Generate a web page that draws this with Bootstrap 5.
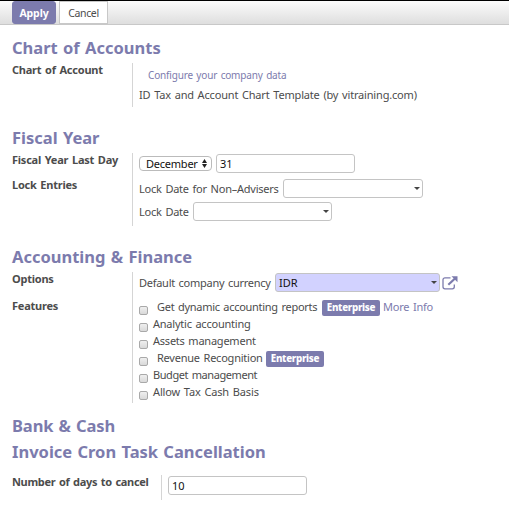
<!DOCTYPE html>
<html lang="en">
<head>
<meta charset="utf-8">
<meta name="viewport" content="width=device-width, initial-scale=1">
<title>Accounting Settings</title>
<link href="https://cdn.jsdelivr.net/npm/bootstrap@5.3.0/dist/css/bootstrap.min.css" rel="stylesheet">
<style>
:root{--brand:#7c7bad}
body{font:11px/17px "Noto Sans","Open Sans",sans-serif;letter-spacing:-.23px;word-spacing:1.1px;color:#4c4c4c;background:#fff;overflow:hidden}
.toolbar{height:25px;border-top:1px solid #000;border-bottom:1px solid #c8c8c8;background:linear-gradient(#fcfcfc,#dedede);padding-left:12px;gap:3px}
.toolbar .btn{height:23px;font-size:10.5px;line-height:18px;padding:0}
.toolbar .btn-apply,.toolbar .btn-apply:hover{width:44px;background:var(--brand);color:#fff;border:1px solid var(--brand);border-radius:3px;font-weight:700;letter-spacing:-.1px}
.toolbar .btn-cancel,.toolbar .btn-cancel:hover{width:49px;background:#fff;color:#4c4c4c;border:1px solid #c8c8c8;border-radius:0;letter-spacing:-.35px}
.settings{padding-left:12px}
.section-title{font-size:16.5px;line-height:18px;font-weight:700;letter-spacing:0;word-spacing:1px;color:var(--brand);margin:22px 0 6px;white-space:nowrap}
.title-first{margin-top:14px}
.title-empty{margin:14px 0 8px;letter-spacing:-.1px}
.title-last{margin:0 0 14px}
.group-chart{height:44px}
.group-fiscal{height:73px}
.group-finance{height:131px}
.group-cron{height:25px}
.form-group-label{width:120px;font-weight:700;white-space:nowrap;margin-top:-2px}
.cron-label{width:149px;letter-spacing:-.32px}
.label-gap-25{height:25px}
.label-gap-27{height:27px}
.fields{border-left:1px solid #d5d5d5;padding:1px 0 0 6px;white-space:nowrap}
.field-row{height:19px}
.chart-link{height:19px;padding:3px 0 0 9px;font-size:10px;letter-spacing:-.18px}
.chart-name{height:20px;padding-top:3px;letter-spacing:-.18px}
.box{height:19px;border:1px solid #c4c4c4;border-radius:3px;padding:0 2px 0 3px;line-height:17px;font-size:11px;letter-spacing:0;color:#111;background:#fff;outline:0}
.w-139{width:139px}.w-140{width:140px}.w-165{width:165px}
.required{background:#d2d2ff}
.drop-arrow{width:6px;height:3px;fill:#444}
.month{width:73px;height:15px;border:1px solid #bbb;border-radius:4px;padding:0 4px 0 6px;margin-right:4px;line-height:13px;color:#111}
.gap-after-6{margin-bottom:6px}.gap-after-4{margin-bottom:4px}.gap-after-7{margin-bottom:7px}
.text-lock{width:144px}.text-date{width:54px}.text-currency{width:136px;letter-spacing:-.27px;margin-top:-1px}
.text-reports{margin-left:4px;width:161px;letter-spacing:-.29px}.text-revenue{margin-left:4px;width:105px}
.open-icon{margin-left:2px}
.brand-text,.brand-text:hover{color:var(--brand);text-decoration:none}
.option{height:17px;line-height:15px}
.option input{appearance:none;width:9px;height:9px;margin:7px 5px 0 0;border:1px solid #a9a9a9;border-radius:2px;background:linear-gradient(#efefef,#d9d9d9)}
.text-budget{letter-spacing:-.42px}
.text-basis{letter-spacing:-.15px}
.tag{height:16px;width:58px;border-radius:2px;background:var(--brand);color:#fff;font-weight:800;font-size:9.8px;letter-spacing:-.3px;line-height:15px;text-align:center;margin:1px 3px 0 4px}
</style>
<script src="https://cdn.jsdelivr.net/npm/bootstrap@5.3.0/dist/js/bootstrap.bundle.min.js"></script>
</head>
<body>
<header class="toolbar d-flex">
  <button class="btn btn-apply">Apply</button>
  <button class="btn btn-cancel">Cancel</button>
</header>
<main class="settings">
  <h2 class="section-title title-first">Chart of Accounts</h2>
  <section class="d-flex group-chart">
    <div class="form-group-label">Chart of Account</div>
    <div class="fields">
      <div class="chart-link"><a href="#" class="brand-text">Configure your company data</a></div>
      <div class="chart-name">ID Tax and Account Chart Template (by vitraining.com)</div>
    </div>
  </section>

  <h2 class="section-title">Fiscal Year</h2>
  <section class="d-flex group-fiscal">
    <div class="form-group-label"><div class="label-gap-25">Fiscal Year Last Day</div><div>Lock Entries</div></div>
    <div class="fields">
      <div class="field-row gap-after-6 d-flex align-items-center">
        <div class="month d-flex align-items-center justify-content-between"><span>December</span>
          <svg width="5" height="9" viewBox="0 0 5 9" fill="#222"><path d="M0 4 2.5 0 5 4zM0 5h5L2.5 9z"/></svg></div>
        <input class="box w-139" value="31" aria-label="Day">
      </div>
      <div class="field-row gap-after-4 d-flex align-items-center">
        <span class="text-lock">Lock Date for Non–Advisers</span>
        <div class="box w-140 d-flex align-items-center justify-content-end"><svg class="drop-arrow" viewBox="0 0 6 3"><path d="M0 0h6L3 3z"/></svg></div>
      </div>
      <div class="field-row d-flex align-items-center">
        <span class="text-date">Lock Date</span>
        <div class="box w-139 d-flex align-items-center justify-content-end"><svg class="drop-arrow" viewBox="0 0 6 3"><path d="M0 0h6L3 3z"/></svg></div>
      </div>
    </div>
  </section>

  <h2 class="section-title">Accounting &amp; Finance</h2>
  <section class="d-flex group-finance">
    <div class="form-group-label"><div class="label-gap-27">Options</div><div>Features</div></div>
    <div class="fields">
      <div class="field-row gap-after-7 d-flex align-items-center">
        <span class="text-currency">Default company currency</span>
        <div class="box w-165 required d-flex align-items-center justify-content-between"><span>IDR</span><svg class="drop-arrow" viewBox="0 0 6 3"><path d="M0 0h6L3 3z"/></svg></div>
        <svg class="open-icon" width="16" height="14" viewBox="0 0 16 14" fill="none" stroke="#7c7bad"><path stroke-width="1.3" d="M8.5 1.8H3a2 2 0 0 0-2 2v7a2 2 0 0 0 2 2h7.3a2 2 0 0 0 2-2V8.5"/><path stroke-width="2.2" d="M6.3 8.7 13 2.5"/><path fill="#7c7bad" stroke="none" d="M9.5.2h6v6z"/></svg>
      </div>
      <div class="option d-flex"><input type="checkbox" aria-label="Dynamic reports"><span class="text-reports">Get dynamic accounting reports</span><span class="tag">Enterprise</span><a href="#" class="brand-text">More Info</a></div>
      <div class="option d-flex"><input type="checkbox" aria-label="Analytic"><span>Analytic accounting</span></div>
      <div class="option d-flex"><input type="checkbox" aria-label="Assets"><span>Assets management</span></div>
      <div class="option d-flex"><input type="checkbox" aria-label="Revenue"><span class="text-revenue">Revenue Recognition</span><span class="tag">Enterprise</span></div>
      <div class="option d-flex"><input type="checkbox" aria-label="Budget"><span class="text-budget">Budget management</span></div>
      <div class="option d-flex"><input type="checkbox" aria-label="Cash basis"><span class="text-basis">Allow Tax Cash Basis</span></div>
    </div>
  </section>

  <h2 class="section-title title-empty">Bank &amp; Cash</h2>
  <h2 class="section-title title-last">Invoice Cron Task Cancellation</h2>
  <section class="d-flex group-cron">
    <div class="form-group-label cron-label">Number of days to cancel</div>
    <div class="fields"><input class="box w-139 d-block" value="10" aria-label="Days"></div>
  </section>
</main>
</body>
</html>
